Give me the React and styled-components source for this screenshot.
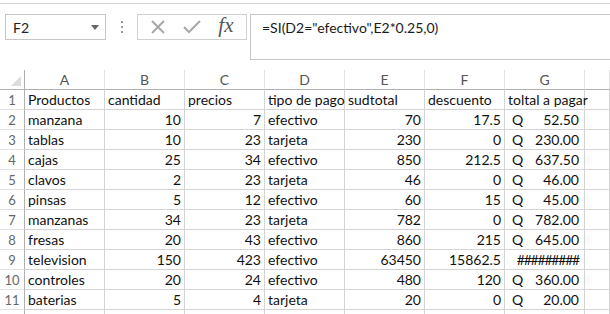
import React from "react";
import styled, { createGlobalStyle } from "styled-components";

const GlobalStyle = createGlobalStyle`
  html, body {
    margin: 0;
    padding: 0;
    background: #ffffff;
    overflow: hidden;
  }
`;

const Page = styled.div`
  width: 610px;
  height: 314px;
  overflow: hidden;
  background: #ffffff;
  font-family: "Lato", "Liberation Sans", sans-serif;
`;

const RibbonEdge = styled.div`
  height: 3px;
  border-bottom: 1px solid #d6d6d6;
  margin-bottom: 10px;
`;

const FormulaRow = styled.div`
  display: flex;
  align-items: flex-start;
  padding-left: 5px;
  height: 46px;
`;

const NameBox = styled.div`
  box-sizing: border-box;
  width: 101px;
  height: 26px;
  border: 1px solid #c6c6c6;
  display: flex;
  align-items: center;
  justify-content: space-between;
  padding: 0 6px 0 7px;
  font-size: 14px;
  color: #222;
`;

const Caret = styled.span`
  width: 0;
  height: 0;
  border-left: 4px solid transparent;
  border-right: 4px solid transparent;
  border-top: 5px solid #666;
`;

const Grip = styled.div`
  width: 31px;
  height: 26px;
  display: flex;
  flex-direction: column;
  align-items: center;
  justify-content: center;
  gap: 3px;

  span {
    width: 2px;
    height: 2px;
    background: #9a9a9a;
  }
`;

const FxBox = styled.div`
  box-sizing: border-box;
  width: 110px;
  height: 26px;
  border: 1px solid #d0d0d0;
  display: flex;
  align-items: center;
  justify-content: space-around;
  padding: 0 4px;
`;

const Fx = styled.span`
  font-family: "Liberation Serif", serif;
  font-style: italic;
  font-size: 21px;
  color: #555;
  margin-top: -3px;
`;

const FormulaInput = styled.div`
  box-sizing: border-box;
  flex: 1;
  height: 46px;
  margin-left: 3px;
  border: 1px solid #c6c6c6;
  border-right: none;
  padding: 4px 0 0 11px;
  font-size: 14px;
  color: #1a1a1a;
`;

const Sheet = styled.div`
  margin-top: 10px;
  display: grid;
  grid-template-columns: 25px repeat(7, 80px) 1fr;
  grid-auto-rows: 20px;
  font-size: 14px;
`;

const Corner = styled.div`
  box-sizing: border-box;
  border-right: 1px solid #b0b0b0;
  border-bottom: 1px solid #b0b0b0;
  position: relative;

  &::after {
    content: "";
    position: absolute;
    right: 3px;
    bottom: 3px;
    border-left: 10px solid transparent;
    border-bottom: 10px solid #dcdcdc;
  }
`;

const ColHead = styled.div`
  box-sizing: border-box;
  border-right: 1px solid #e2e2e2;
  border-bottom: 1px solid #b0b0b0;
  display: flex;
  align-items: center;
  justify-content: center;
  color: #555;
`;

const RowHead = styled.div`
  box-sizing: border-box;
  border-right: 1px solid #b0b0b0;
  border-bottom: 1px solid #e2e2e2;
  display: flex;
  align-items: center;
  justify-content: center;
  color: #666;
  font-size: 13px;
`;

const Cell = styled.div`
  box-sizing: border-box;
  border-right: 1px solid #d4d4d4;
  border-bottom: 1px solid #d4d4d4;
  display: flex;
  align-items: center;
  justify-content: ${({ $num }) => ($num ? "flex-end" : "flex-start")};
  padding: 0 3px 0 3px;
  white-space: nowrap;
  overflow: visible;
  color: #111;
  position: relative;
  z-index: ${({ $over }) => ($over ? 1 : 0)};
`;

const Money = styled(Cell)`
  justify-content: space-between;
  padding: 0 5px 0 7px;
`;

const Hashes = styled(Cell)`
  justify-content: flex-end;
  padding-right: 5px;
  letter-spacing: -1.2px;
`;

const cols = ["A", "B", "C", "D", "E", "F", "G", ""];

const rows = [
  ["manzana", 10, 7, "efectivo", 70, 17.5, "52.50"],
  ["tablas", 10, 23, "tarjeta", 230, 0, "230.00"],
  ["cajas", 25, 34, "efectivo", 850, 212.5, "637.50"],
  ["clavos", 2, 23, "tarjeta", 46, 0, "46.00"],
  ["pinsas", 5, 12, "efectivo", 60, 15, "45.00"],
  ["manzanas", 34, 23, "tarjeta", 782, 0, "782.00"],
  ["fresas", 20, 43, "efectivo", 860, 215, "645.00"],
  ["television", 150, 423, "efectivo", 63450, 15862.5, null],
  ["controles", 20, 24, "efectivo", 480, 120, "360.00"],
  ["baterias", 5, 4, "tarjeta", 20, 0, "20.00"],
];

const headers = ["Productos", "cantidad", "precios", "tipo de pago", "sudtotal", "descuento", "toltal a pagar"];

function CancelIcon() {
  return (
    <svg width="16" height="16" viewBox="0 0 16 16">
      <path d="M2 2 L14 14 M14 2 L2 14" stroke="#a8a8a8" strokeWidth="2" fill="none" />
    </svg>
  );
}

function CheckIcon() {
  return (
    <svg width="18" height="16" viewBox="0 0 18 16">
      <path d="M1 8 L6 13 L17 2" stroke="#a8a8a8" strokeWidth="2" fill="none" />
    </svg>
  );
}

export default function App() {
  return (
    <Page>
      <GlobalStyle />
      <RibbonEdge />
      <FormulaRow>
        <NameBox>
          F2
          <Caret />
        </NameBox>
        <Grip>
          <span />
          <span />
          <span />
        </Grip>
        <FxBox>
          <CancelIcon />
          <CheckIcon />
          <Fx>fx</Fx>
        </FxBox>
        <FormulaInput>=SI(D2="efectivo",E2*0.25,0)</FormulaInput>
      </FormulaRow>
      <Sheet>
        <Corner />
        {cols.map((c, i) => (
          <ColHead key={i}>{c}</ColHead>
        ))}
        <RowHead>1</RowHead>
        {headers.map((h, i) => (
          <Cell key={i} $over={i === 3 || i === 6}>
            {h}
          </Cell>
        ))}
        <Cell />
        {rows.map((r, ri) => (
          <React.Fragment key={ri}>
            <RowHead>{ri + 2}</RowHead>
            <Cell>{r[0]}</Cell>
            <Cell $num>{r[1]}</Cell>
            <Cell $num>{r[2]}</Cell>
            <Cell>{r[3]}</Cell>
            <Cell $num>{r[4]}</Cell>
            <Cell $num>{r[5]}</Cell>
            {r[6] === null ? (
              <Hashes>#########</Hashes>
            ) : (
              <Money>
                <span>Q</span>
                <span>{r[6]}</span>
              </Money>
            )}
            <Cell />
          </React.Fragment>
        ))}
        <RowHead />
        {cols.map((c, i) => (
          <Cell key={i} />
        ))}
      </Sheet>
    </Page>
  );
}
